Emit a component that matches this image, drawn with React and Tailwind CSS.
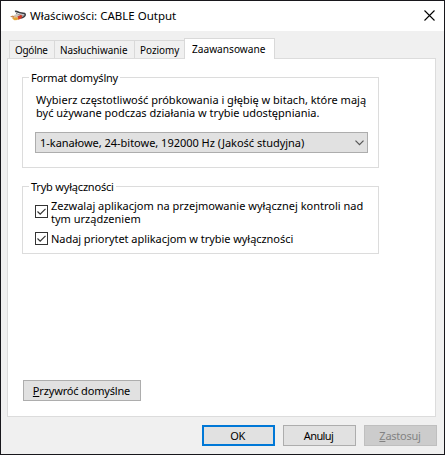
import { useState } from 'react';

const tabs = [
  { label: 'Ogólne', className: 'w-[46px] border-l tracking-[-0.25px]' },
  { label: 'Nasłuchiwanie', className: 'w-20' },
  { label: 'Poziomy', className: 'w-[49px] border-r-0' },
];

function AppIcon() {
  return (
    <svg width="17" height="12" viewBox="0 0 17 12" fill="none">
      <path d="M5 1.500c2-.8 3 1 5 1.300l4.500.7c1.500 1 .5 3-1.500 3.700l-2 .8" stroke="#3b3d42" strokeWidth="1.600" />
      <path d="M6 3.500l4 1.500 4 .2" stroke="#6b6e73" strokeWidth="1" />
      <path d="M4 5l3-1 3 1-2 2.500-3-.5z" fill="#c9c2ba" />
      <path d="M7.500 6.500L11 4.800l1.500 1.500-1.500 2.500-3 1z" fill="#cf3a26" />
      <path d="M0 6.500l3-1 2.500 1.500-2 1z" fill="#c98a50" />
      <path d="M2 8.500l4-1.500 2.500 1-1 2-3 .3z" fill="#e3a536" />
    </svg>
  );
}

function GroupBox({ title, className, children }) {
  return (
    <section className={`w-[357px] border border-[#dcdcdc] ${className}`}>
      <h2 className="-mt-[9px] ml-[6px] h-[17px] w-fit bg-white px-0.5 leading-[17px] tracking-[-0.2px]">{title}</h2>
      {children}
    </section>
  );
}

function Check({ className, checked, onChange, children }) {
  return (
    <label className={`flex items-center ${className}`}>
      <input type="checkbox" checked={checked} onChange={onChange} className="sr-only" />
      <span className="flex size-[13px] shrink-0 border border-[#333]">
        {checked && (
          <svg width="11" height="11" viewBox="0 0 11 11" fill="none">
            <path d="M1.500 5.500l2.700 2.700 5.300-5.400" stroke="#333" strokeWidth="1.200" />
          </svg>
        )}
      </span>
      <span className="ml-[3px] whitespace-nowrap leading-[13px]">{children}</span>
    </label>
  );
}

export default function App() {
  const [allowExclusive, setAllowExclusive] = useState(true);
  const [priority, setPriority] = useState(true);

  return (
    <div className="flex h-[455px] w-[445px] flex-col border border-[#18171c] bg-[#f0f0f0] font-['Noto_Sans',sans-serif] text-[11px] text-black select-none">
      <header className="flex h-[30px] shrink-0 items-center bg-white pl-[9px]">
        <AppIcon />
        <h1 className="ml-[3px] whitespace-nowrap text-[11.500px]">Właściwości: CABLE Output</h1>
        <button className="mr-[9px] mb-0.5 ml-auto" aria-label="Zamknij">
          <svg width="11" height="11" viewBox="0 0 11 11" fill="none">
            <path d="M.5.500l10 10M10.500.500l-10 10" stroke="#000" strokeWidth="1.100" />
          </svg>
        </button>
      </header>

      <nav className="mt-[7px] flex h-5 shrink-0 items-end pl-2">
        {tabs.map((tab) => (
          <button
            key={tab.label}
            className={`h-[18px] border-t border-r border-[#d9d9d9] pl-[5px] text-left leading-[18px] whitespace-nowrap ${tab.className}`}
          >
            <span className="inline-block origin-left scale-x-90">{tab.label}</span>
          </button>
        ))}
        <button className="relative z-10 -mb-px h-[21px] w-[91px] border border-b-0 border-[#d9d9d9] bg-white pl-[7px] text-left leading-[18px]">
          <span className="inline-block origin-left scale-x-92">Zaawansowane</span>
        </button>
      </nav>

      <main className="ml-1.5 flex h-[359px] w-[429px] shrink-0 flex-col border border-[#dcdcdc] bg-white pl-[14px]">
        <GroupBox title="Format domyślny" className="mt-[18px] h-[91px]">
          <p className="mt-[7px] ml-[13px] leading-[13px] whitespace-nowrap">
            Wybierz częstotliwość próbkowania i głębię w bitach, które mają
            <br />
            być używane podczas działania w trybie udostępniania.
          </p>
          <button className="mt-[13px] ml-3 flex h-[21px] w-[333px] items-center border border-[#adadad] bg-[#e1e1e1] pr-[3px] pl-1">
            <span className="pt-0.5 tracking-[-0.02px] whitespace-nowrap">1-kanałowe, 24-bitowe, 192000 Hz (Jakość studyjna)</span>
            <svg className="ml-auto" width="9" height="6" viewBox="0 0 9 6" fill="none">
              <path d="M.5.700l4 4 4-4" stroke="#555" strokeWidth="1.200" />
            </svg>
          </button>
        </GroupBox>

        <GroupBox title="Tryb wyłączności" className="mt-[18px] h-[68px]">
          <Check
            className="mt-[3px] ml-3 h-[26px] *:last:pt-0.5"
            checked={allowExclusive}
            onChange={(e) => setAllowExclusive(e.target.checked)}
          >
            Zezwalaj aplikacjom na przejmowanie wyłącznej kontroli nad
            <br />
            tym urządzeniem
          </Check>
          <Check
            className="mt-2 ml-3 tracking-[-0.05px]"
            checked={priority}
            onChange={(e) => setPriority(e.target.checked)}
          >
            Nadaj priorytet aplikacjom w trybie wyłączności
          </Check>
        </GroupBox>

        <button className="mt-auto mb-[15px] ml-px h-[21px] w-[118px] border border-[#adadad] bg-[#e1e1e1] pr-px leading-[19px] tracking-[-0.17px]">
          <span className="underline">P</span>rzywróć domyślne
        </button>
      </main>

      <footer className="mt-2 mr-[7px] flex justify-end gap-2">
        <button className="h-[21px] w-[73px] border-2 border-[#0078d7] bg-[#e1e1e1] pr-0.5 leading-[17px] tracking-[-0.5px]">
          OK
        </button>
        <button className="h-[21px] w-[73px] border border-[#adadad] bg-[#e1e1e1] pr-0.5 leading-[19px] tracking-[-0.6px]">
          Anuluj
        </button>
        <button
          disabled
          className="h-[21px] w-[73px] border border-[#bfbfbf] bg-[#ccc] pr-px leading-[19px] tracking-[-0.25px] text-[#838383]"
        >
          <span className="underline">Z</span>astosuj
        </button>
      </footer>
    </div>
  );
}
